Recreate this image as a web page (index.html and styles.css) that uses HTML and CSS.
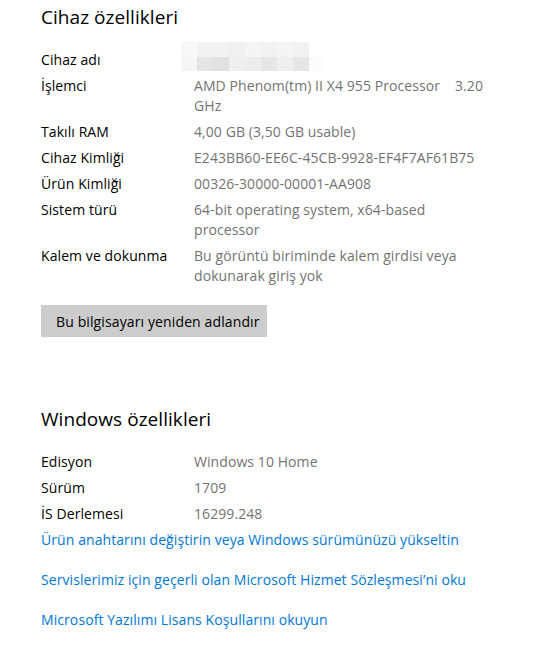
FILE: index.html
```html
<!DOCTYPE html>
<html lang="tr">
<head>
<meta charset="utf-8">
<title>Hakkında</title>
<link rel="stylesheet" href="styles.css">
</head>
<body>
<main class="page">
  <section class="device">
    <h2 class="title">Cihaz özellikleri</h2>
    <dl class="specs">
      <dt>Cihaz adı</dt>
      <dd class="masked"><div class="blur"><div class="blur-top"></div><div class="blur-bottom"></div></div></dd>
      <dt>İşlemci</dt>
      <dd>AMD Phenom(tm) II X4 955 Processor&nbsp;&nbsp;&nbsp;&nbsp;3.20 GHz</dd>
      <dt>Takılı RAM</dt>
      <dd>4,00 GB (3,50 GB usable)</dd>
      <dt>Cihaz Kimliği</dt>
      <dd>E243BB60-EE6C-45CB-9928-EF4F7AF61B75</dd>
      <dt>Ürün Kimliği</dt>
      <dd>00326-30000-00001-AA908</dd>
      <dt>Sistem türü</dt>
      <dd>64-bit operating system, x64-based processor</dd>
      <dt>Kalem ve dokunma</dt>
      <dd>Bu görüntü biriminde kalem girdisi veya dokunarak giriş yok</dd>
    </dl>
    <button class="rename" type="button">Bu bilgisayarı yeniden adlandır</button>
  </section>
  <section class="windows">
    <h2 class="title">Windows özellikleri</h2>
    <dl class="specs">
      <dt>Edisyon</dt>
      <dd>Windows 10 Home</dd>
      <dt>Sürüm</dt>
      <dd>1709</dd>
      <dt>İS Derlemesi</dt>
      <dd>16299.248</dd>
    </dl>
    <nav class="links">
      <a href="#">Ürün anahtarını değiştirin veya Windows sürümünüzü yükseltin</a>
      <a href="#">Servislerimiz için geçerli olan Microsoft Hizmet Sözleşmesi’ni oku</a>
      <a href="#">Microsoft Yazılımı Lisans Koşullarını okuyun</a>
    </nav>
  </section>
</main>
</body>
</html>
```
FILE: styles.css
```css
html, body {
  margin: 0;
  padding: 0;
  background: #ffffff;
}

body {
  font-family: "Open Sans", "Noto Sans", "Liberation Sans", sans-serif;
  font-size: 14px;
  letter-spacing: 0.08px;
  color: #000000;
}

.page {
  width: 533px;
  padding: 3px 0 0 41px;
  box-sizing: border-box;
}

.title {
  margin: 0;
  font-size: 19px;
  font-weight: 400;
  line-height: 28px;
  letter-spacing: 0.05px;
  color: #000000;
}

.specs {
  display: grid;
  grid-template-columns: 153px 293px;
  row-gap: 6px;
  margin: 19px 0 0 0;
  line-height: 20px;
}

.specs dt {
  margin: 0;
  color: #000000;
}

.specs dd {
  margin: 0;
  color: #737373;
}

.masked {
  position: relative;
  height: 20px;
}

.blur {
  position: absolute;
  left: -13px;
  top: -8px;
  display: flex;
  flex-direction: column;
}

.blur-top {
  width: 128px;
  height: 15px;
  background: linear-gradient(to right,
    #f8f8f8 0 16px, #f2f2f2 16px 32px, #f2f2f2 32px 48px, #f0f0f0 48px 64px,
    #f5f5f5 64px 80px, #f2f2f2 80px 96px, #f4f4f4 96px 112px, #f2f2f2 112px 128px);
}

.blur-bottom {
  width: 144px;
  height: 14px;
  background: linear-gradient(to right,
    #f6f6f6 0 16px, #e5e5e5 16px 32px, #e1e1e1 32px 48px, #efefef 48px 64px,
    #ececec 64px 80px, #e6e6e6 80px 96px, #efefef 96px 112px, #e6e6e6 112px 128px,
    #fcfcfc 128px 144px);
}

.rename {
  display: block;
  margin-top: 19px;
  width: 226px;
  height: 32px;
  padding: 0 0 0 15px;
  border: none;
  background: #cccccc;
  font-family: inherit;
  font-size: 14px;
  letter-spacing: 0.12px;
  text-align: left;
  color: #000000;
}

.windows {
  margin-top: 68px;
}

.links {
  display: flex;
  flex-direction: column;
  gap: 20px;
  margin-top: 6px;
  line-height: 20px;
}

.links a {
  color: #0078d7;
  text-decoration: none;
}
```
